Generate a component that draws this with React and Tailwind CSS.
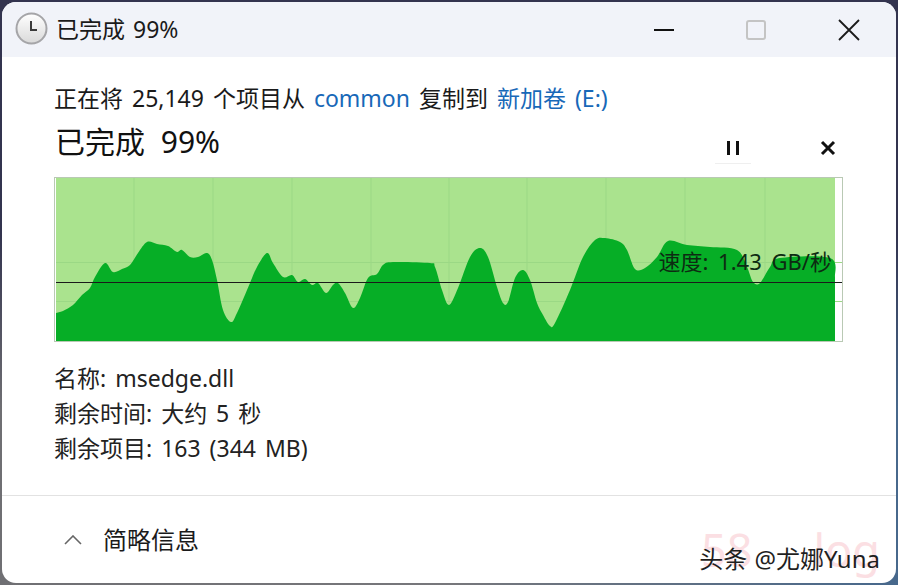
import React from "react";

const font = "font-['Noto_Sans','Noto_Sans_CJK_SC',sans-serif]";

const curve = [
  [56, 313], [63, 311], [73, 305], [82, 295], [90, 288], [95, 277], [105, 263], [113, 272], [122, 269], [130, 265],
  [138, 253], [147, 242], [157, 244], [168, 246], [177, 252], [182, 250], [190, 257], [198, 257], [207, 253], [212, 260],
  [217, 280], [223, 310], [231, 322], [237, 313], [250, 283], [257, 267], [267, 253], [273, 263], [283, 277], [292, 275],
  [298, 282], [305, 279], [312, 285], [318, 283], [326, 293], [333, 285], [338, 283], [345, 293], [353, 308], [360, 298],
  [368, 278], [377, 274], [383, 265], [393, 262], [430, 263], [435, 267], [442, 290], [449, 305], [458, 288], [470, 257],
  [480, 248], [488, 257], [497, 287], [503, 303], [508, 302], [515, 278], [523, 270], [530, 280], [537, 303], [543, 315],
  [550, 326], [555, 323], [570, 290], [583, 257], [595, 240], [605, 238], [620, 242], [627, 250], [635, 269], [645, 268],
  [657, 257], [668, 241], [687, 245], [710, 247], [737, 250], [747, 267], [753, 282], [760, 283], [770, 267], [780, 258],
  [830, 258], [835, 277],
];

// smooth the sampled speed curve, catmull-rom to bezier
function areaPath(pts) {
  let d = `M56 341 L${pts[0][0]} ${pts[0][1]}`;
  for (let i = 0; i < pts.length - 1; i++) {
    const p0 = pts[i - 1] || pts[i];
    const p1 = pts[i];
    const p2 = pts[i + 1];
    const p3 = pts[i + 2] || p2;
    const c1x = p1[0] + (p2[0] - p0[0]) / 6;
    const c1y = p1[1] + (p2[1] - p0[1]) / 6;
    const c2x = p2[0] - (p3[0] - p1[0]) / 6;
    const c2y = p2[1] - (p3[1] - p1[1]) / 6;
    d += ` C${c1x} ${c1y} ${c2x} ${c2y} ${p2[0]} ${p2[1]}`;
  }
  return d + " L835 341 Z";
}

const vLines = [134, 213, 292, 371, 449, 527, 606, 685, 765];

function SpeedChart() {
  return (
    <div className="relative mt-[5px] h-[165px] w-[789px] border border-[#b9c9b4] bg-white">
      <svg width="787" height="163" viewBox="55 178 787 163" className="block">
        <rect x="56" y="178" width="779" height="163" fill="#aae38e" />
        {vLines.map((x) => (
          <line key={x} x1={x} y1="178" x2={x} y2="341" stroke="#9bd885" />
        ))}
        <line x1="56" y1="262.5" x2="842" y2="262.5" stroke="#9bd885" />
        <line x1="56" y1="301.5" x2="842" y2="301.5" stroke="#9bd885" />
        <path d={areaPath(curve)} fill="#06ae26" />
        <line x1="56" y1="282.5" x2="842" y2="282.5" stroke="#1a1a1a" />
      </svg>
      <span className="absolute right-[10px] top-[67px] whitespace-pre text-[22px] leading-[32px] text-[#0d2b12] [word-spacing:4px]">
        速度: 1.43 GB/秒
      </span>
    </div>
  );
}

function ClockIcon() {
  return (
    <svg width="33" height="33" viewBox="0 0 33 33" className="mb-[3px]">
      <defs>
        <linearGradient id="face" x1="0" y1="0" x2="0" y2="1">
          <stop offset="0" stopColor="#ffffff" />
          <stop offset="1" stopColor="#d9d9d9" />
        </linearGradient>
      </defs>
      <circle cx="16.5" cy="16.5" r="15" fill="url(#face)" stroke="#a5a5a8" strokeWidth="2" />
      <path d="M16 9 V18 H22" fill="none" stroke="#3a3a3a" strokeWidth="2" />
    </svg>
  );
}

export default function App() {
  return (
    <div
      className={`h-[585px] w-[898px] overflow-hidden bg-[linear-gradient(180deg,#33344f_0,#33344f_40%,transparent_70%),linear-gradient(90deg,#6f6f73,#77777b_50%,#47688c)] p-[2px] ${font}`}
    >
      <div className="flex h-[581px] flex-col overflow-hidden rounded-[14px] bg-white text-[#1a1a1a]">
        {/* TITLE BAR */}
        <div className="flex h-[55px] shrink-0 items-center bg-[#f1f3f9] pl-[13px]">
          <ClockIcon />
          <span className="mb-[1px] ml-[8px] whitespace-pre text-[23px] leading-none [word-spacing:2px]">已完成 99%</span>
          <div className="ml-auto flex items-center">
            <div className="h-[2px] w-[20px] bg-[#111]" />
            <div className="ml-[72px] h-[20px] w-[20px] rounded-[3px] border-2 border-[#c4c4c4]" />
            <svg width="22" height="22" viewBox="0 0 22 22" className="ml-[72px] mr-[36px]">
              <path d="M1 1 L21 21 M21 1 L1 21" stroke="#1a1a1a" strokeWidth="1.8" />
            </svg>
          </div>
        </div>

        {/* CONTENT */}
        <div className="flex flex-1 flex-col pl-[52px]">
          <p className="mt-[25px] whitespace-pre text-[23px] leading-[32px] [word-spacing:3px]">
            正在将 25,149 个项目从 <span className="text-[#1768b8]">common</span> 复制到{" "}
            <span className="text-[#1768b8]">新加卷 (E:)</span>
          </p>
          <div className="mt-[10px] flex h-[48px] w-[789px] items-center">
            <span className="mb-[12px] ml-[1px] whitespace-pre text-[30px] leading-[36px] text-[#111] [word-spacing:8px]">
              已完成 99%
            </span>
            <div className="ml-auto flex items-center">
              <div className="flex h-[32px] w-[36px] items-center justify-center gap-[6px] border-b border-[#efefef]">
                <span className="h-[14px] w-[3px] bg-[#111]" />
                <span className="h-[14px] w-[3px] bg-[#111]" />
              </div>
              <svg width="16" height="16" viewBox="0 0 16 16" className="ml-[69px] mr-[7px]">
                <path d="M2 2 L14 14 M14 2 L2 14" stroke="#111" strokeWidth="3" />
              </svg>
            </div>
          </div>
          <SpeedChart />
          <div className="mt-[20px] flex flex-col gap-[3px] text-[23px] leading-[32px] text-[#222] [word-spacing:3px]">
            <p className="whitespace-pre">名称: msedge.dll</p>
            <p className="whitespace-pre">剩余时间: 大约 5 秒</p>
            <p className="whitespace-pre">剩余项目: 163 (344 MB)</p>
          </div>
        </div>

        {/* FOOTER */}
        <div className="relative flex h-[88px] shrink-0 items-center border-t border-[#e2e2e2] pl-[62px]">
          <svg width="18" height="10" viewBox="0 0 18 10">
            <path d="M1 9 L9 1 L17 9" fill="none" stroke="#666" strokeWidth="1.6" />
          </svg>
          <span className="ml-[21px] text-[24px] leading-none">简略信息</span>
          {/* watermark */}
          <span className="absolute bottom-[10px] left-[699px] text-[45px] leading-[46px] text-[#fbdfe3]">58</span>
          <span className="absolute bottom-[10px] right-[16px] text-[45px] leading-[46px] text-[#fbdfe3]">log</span>
          <span className="absolute bottom-[8px] right-[16px] whitespace-pre text-[24px] leading-[32px] text-[#1f1f1f] [word-spacing:1px]">
            头条 @尤娜Yuna
          </span>
        </div>
      </div>
    </div>
  );
}
